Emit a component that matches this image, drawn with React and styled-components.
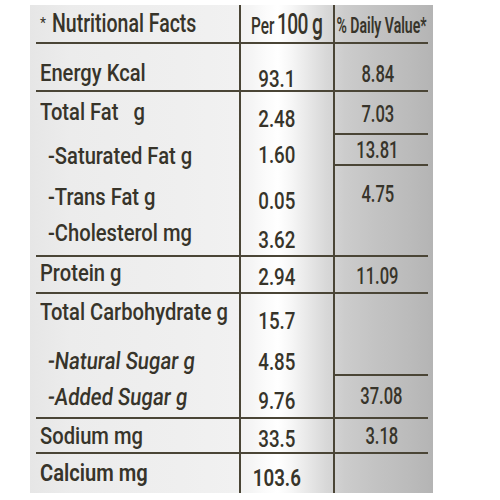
import React from "react";
import styled, { createGlobalStyle } from "styled-components";

const Global = createGlobalStyle`
  html, body { margin: 0; padding: 0; background: #ffffff; }
  body { width: 500px; height: 500px; overflow: hidden; }
`;

const Page = styled.div`
  width: 500px;
  height: 500px;
  padding: 5px 0 0 30px;
  box-sizing: border-box;
  background: #ffffff;
`;

const Label = styled.div`
  width: 403px;
  height: 488px;
  box-sizing: border-box;
  padding: 0 5px 0 6px;
  background: linear-gradient(
    90deg,
    #e6e6e6 0px,
    #ececec 40px,
    #efefef 150px,
    #f1f1f1 205px,
    #f5f5f5 222px,
    #fbfbfb 235px,
    #ffffff 248px,
    #f6f6f6 262px,
    #e6e6e6 280px,
    #d8d8d8 296px,
    #cccccc 315px,
    #c3c3c3 345px,
    #bbbbbb 380px,
    #b4b4b4 403px
  );
  font-family: Roboto, "Liberation Sans", sans-serif;
  color: #37342a;
`;

const Grid = styled.div`
  display: grid;
  grid-template-columns: 203px 94px 95px;
  grid-template-rows: 39px 48px 43px 31px 46px 45px 37px 41px 41px 43px 35px 39px;
`;

const line = "2px solid #4a4536";

const Cell = styled.div`
  box-sizing: border-box;
  display: flex;
  align-items: center;
  min-width: 0;
  white-space: nowrap;
  border-bottom: ${(p) => (p.$rule ? line : "0")};
  padding-top: ${(p) => Math.max(0, (p.$dy || 0) * 2)}px;
  padding-bottom: ${(p) => Math.max(0, -(p.$dy || 0) * 2)}px;
  grid-row: ${(p) => (p.$span ? `span ${p.$span}` : "auto")};
`;

const NameCell = styled(Cell)`
  grid-column: 1;
  padding-left: ${(p) => (p.$indent ? 12 : 4)}px;
`;

const ValueCell = styled(Cell)`
  grid-column: 2;
  border-left: ${line};
  justify-content: center;
  padding-right: ${(p) => (p.$pr != null ? p.$pr : 20)}px;
`;

const DailyCell = styled(Cell)`
  grid-column: 3;
  border-left: ${line};
  justify-content: center;
  padding-right: ${(p) => (p.$pr != null ? p.$pr : 8)}px;
`;

const Txt = styled.span`
  display: inline-block;
  font-size: ${(p) => p.$size || 24}px;
  font-weight: ${(p) => p.$weight || 500};
  line-height: 1;
  letter-spacing: ${(p) => p.$ls || 0}px;
  transform: scaleX(${(p) => p.$sx || 0.84}) skewX(${(p) => (p.$slant ? -7 : 0)}deg);
  transform-origin: ${(p) => p.$origin || "center"} center;
`;

const Big = styled.span`
  font-size: 30px;
  font-weight: 500;
  letter-spacing: -1px;
  margin-left: 4px;
`;

const Star = styled.span`
  font-size: 14px;
  margin-right: 6px;
  position: relative;
  top: -1px;
`;

const HeadName = styled.div`
  display: flex;
  align-items: center;
`;

const rows = [
  { name: "Energy Kcal", value: "93.1", dv: "8.84", ndy: 5.5, vdy: 12, ddy: 7.5, rule: true },
  { name: "Total Fat\u00a0\u00a0\u00a0g", value: "2.48", dv: "7.03", ndy: -2, vdy: 5.5, ddy: 1.5, dvRule: true },
  { name: "-Saturated Fat g", indent: true, value: "1.60", dv: "13.81", ndy: 5.5, vdy: 4.5, ddy: 1, dvRule: true },
  { name: "-Trans Fat g", indent: true, value: "0.05", dv: "4.75", dvSpan: 2, ndy: 7.5, vdy: 12, ddy: -16, dvRule: true },
  { name: "-Cholesterol mg", indent: true, value: "3.62", ndy: -1, vdy: 6.5, rule: true },
  { name: "Protein g", value: "2.94", dv: "11.09", ndy: -1.5, vdy: 2.5, ddy: 1.5, rule: true },
  { name: "Total Carbohydrate g", value: "15.7", dv: "", dvSpan: 2, ndy: -3, vdy: 6.5, dvRule: true },
  { name: "-Natural Sugar g", indent: true, slant: true, value: "4.85", ndy: 5.5, vdy: 6.5 },
  { name: "-Added Sugar g", indent: true, slant: true, value: "9.76", dv: "37.08", ndy: 0, vdy: 4.5, ddy: 0, dpr: -10, rule: true },
  { name: "Sodium mg", value: "33.5", dv: "3.18", ndy: 0, vdy: 3.5, ddy: 0.5, dpr: -8, rule: true },
  { name: "Calcium mg", value: "103.6", dv: "", ndy: -1, vdy: 4, ddy: 0, weight: 600 },
];

export default function App() {
  return (
    <Page>
      <Global />
      <Label>
        <Grid>
          <NameCell $rule>
            <HeadName>
              <Star>*</Star>
              <Txt $size={25} $sx={0.78} $origin="left">Nutritional Facts</Txt>
            </HeadName>
          </NameCell>
          <ValueCell $rule $pr={0}>
            <Txt $size={24} $sx={0.64}>
              Per<Big>100 g</Big>
            </Txt>
          </ValueCell>
          <DailyCell $rule $dy={2} $pr={0}>
            <Txt $size={22} $weight={600} $sx={0.64}>% Daily Value*</Txt>
          </DailyCell>

          {rows.map((r) => (
            <React.Fragment key={r.name}>
              <NameCell $rule={r.rule} $indent={r.indent} $dy={r.ndy}>
                <Txt $origin="left" $sx={0.84} $slant={r.slant} $weight={r.weight}>
                  {r.name}
                </Txt>
              </NameCell>
              <ValueCell $rule={r.rule} $dy={r.vdy}>
                <Txt $sx={0.78} $weight={r.weight}>{r.value}</Txt>
              </ValueCell>
              {r.dv !== undefined && (
                <DailyCell
                  $rule={r.rule || r.dvRule}
                  $span={r.dvSpan}
                  $dy={r.ddy}
                  $pr={r.dpr}
                >
                  <Txt $size={23} $sx={0.72}>{r.dv}</Txt>
                </DailyCell>
              )}
            </React.Fragment>
          ))}
        </Grid>
      </Label>
    </Page>
  );
}
